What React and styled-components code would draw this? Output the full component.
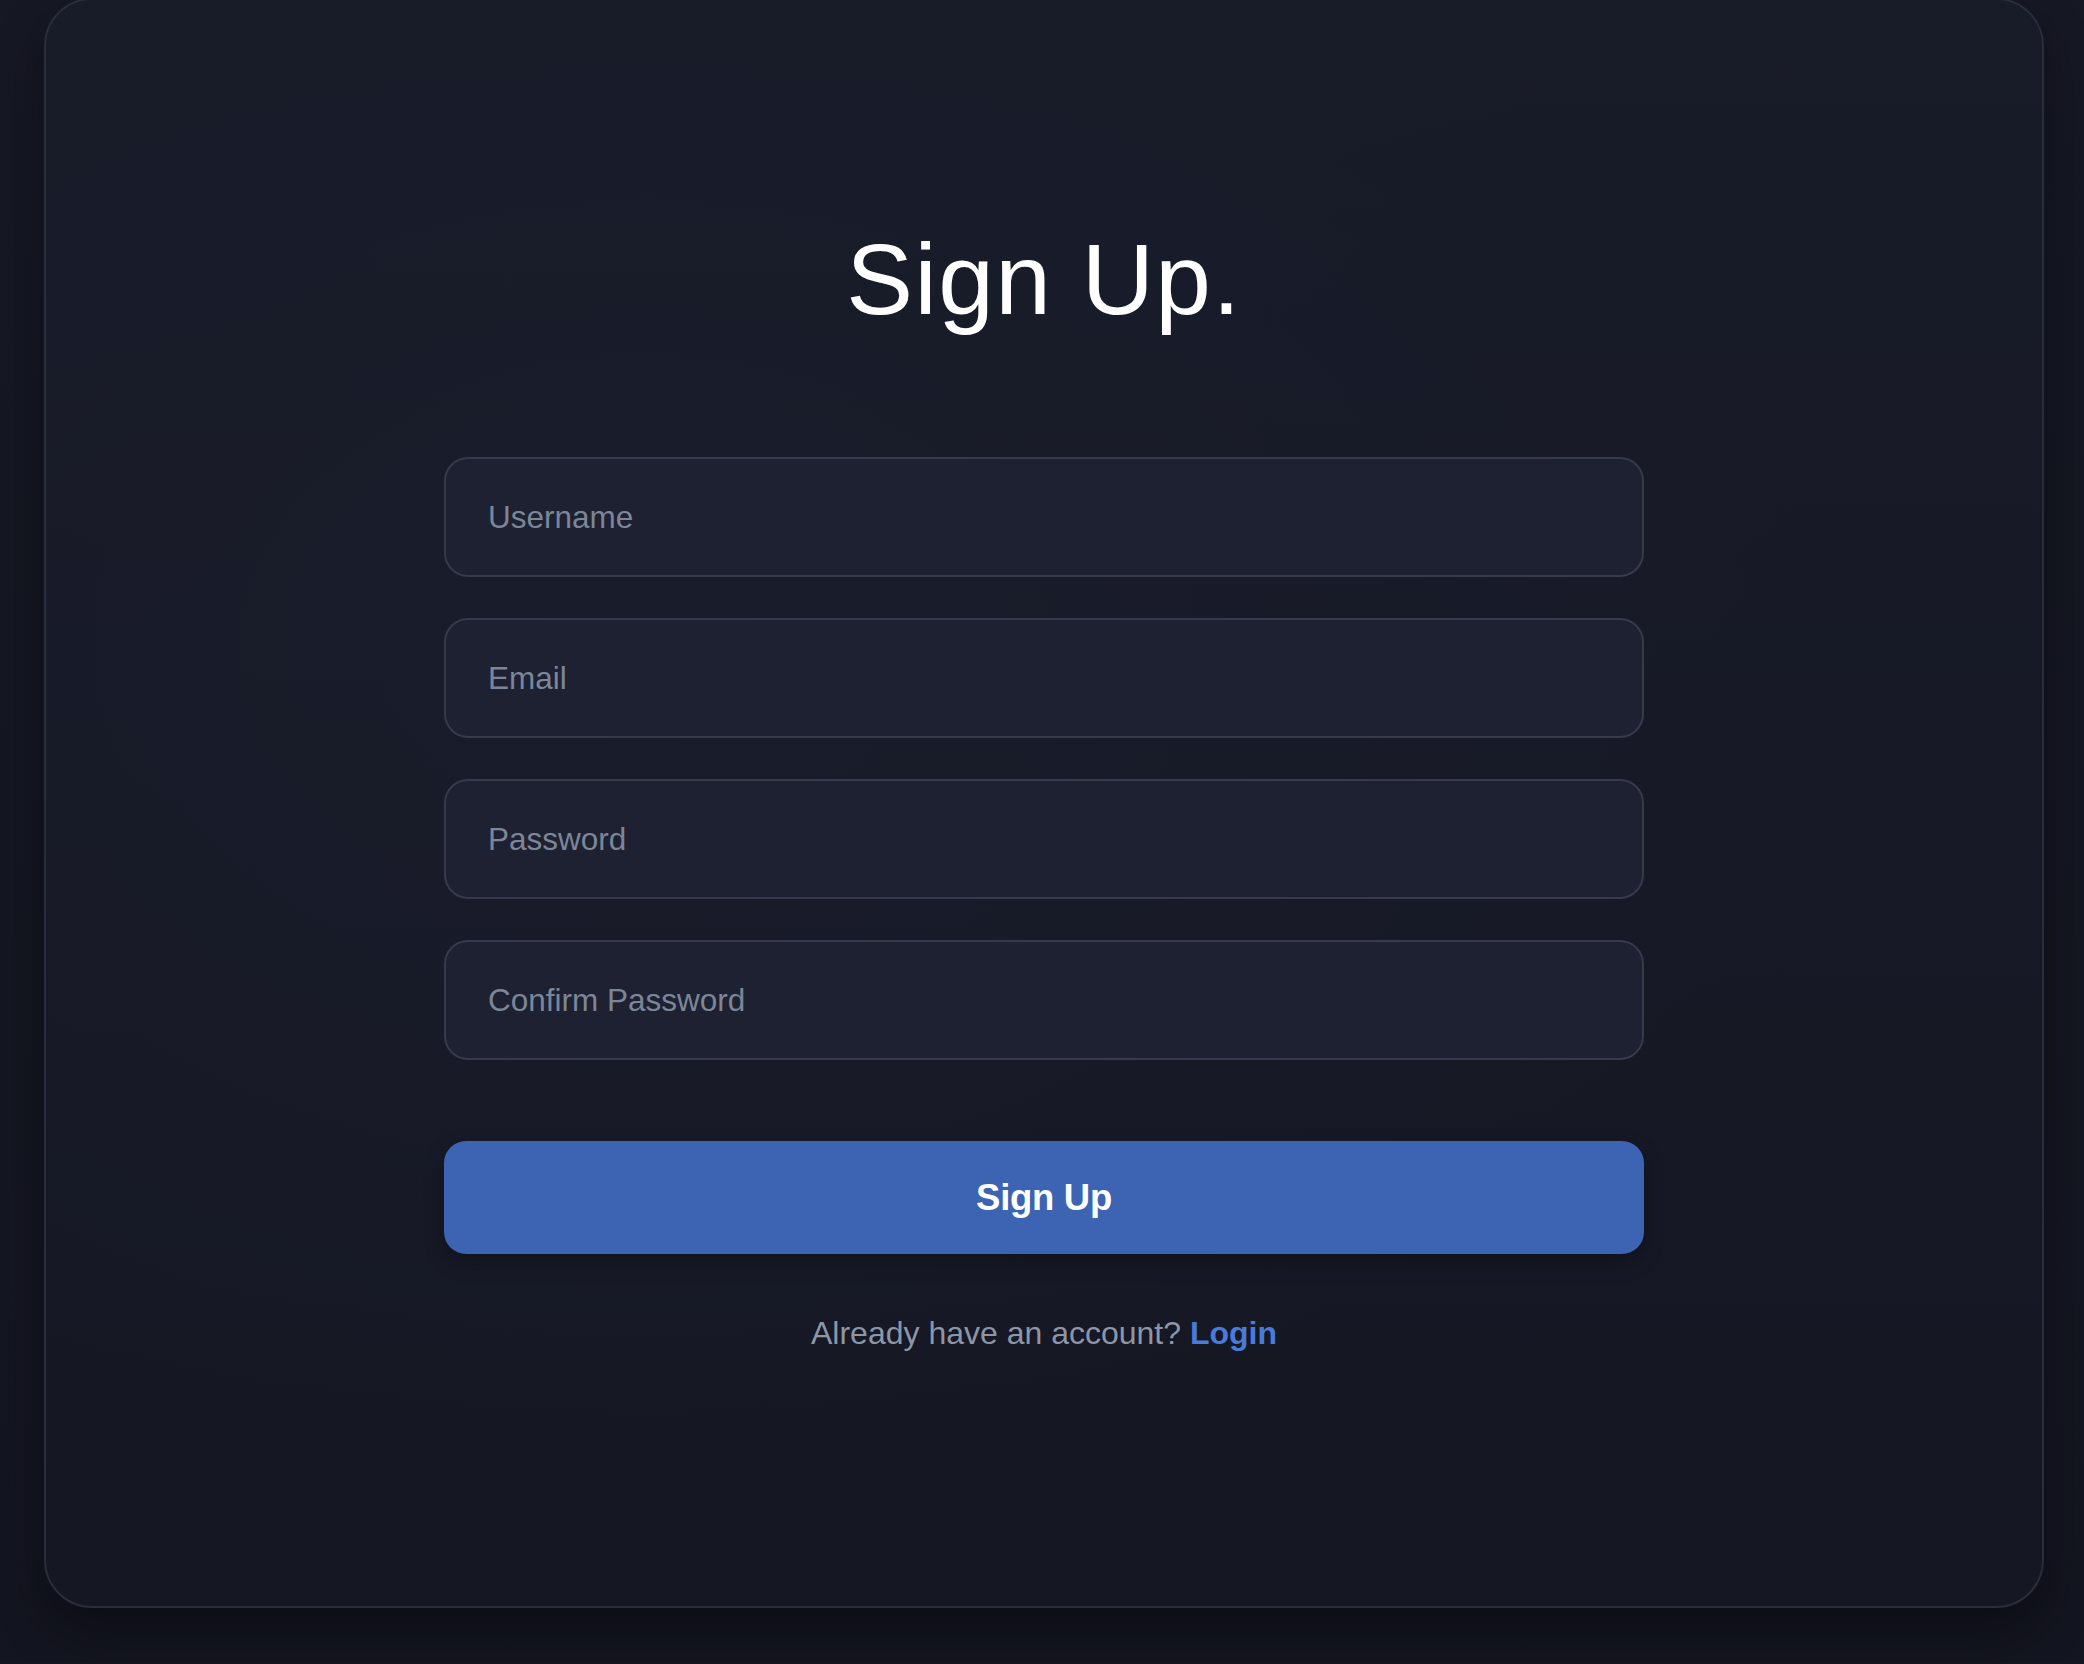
import styled, { createGlobalStyle } from "styled-components";

const GlobalStyle = createGlobalStyle`
  html, body {
    margin: 0;
    padding: 0;
    background: #141620;
    font-family: "Liberation Sans", Arial, sans-serif;
  }
  * {
    box-sizing: border-box;
  }
`;

function App() {
  const fields = ["Username", "Email", "Password", "Confirm Password"];

  return (
    <Page>
      <GlobalStyle />
      <Card>
        <Title>Sign Up.</Title>
        <Form onSubmit={(e) => e.preventDefault()}>
          {fields.map((name) => (
            <Field
              key={name}
              placeholder={name}
              type={name.includes("Password") ? "password" : name === "Email" ? "email" : "text"}
            />
          ))}
          <SubmitButton type="submit">Sign Up</SubmitButton>
        </Form>
        <Footer>
          Already have an account? <LoginLink href="#">Login</LoginLink>
        </Footer>
      </Card>
    </Page>
  );
}

const Page = styled.div`
  width: 100%;
  height: 1664px;
  padding: 0 40px 0 44px;
  background: linear-gradient(180deg, #161824 0%, #131520 100%);
`;

const Card = styled.div`
  width: 100%;
  height: 1610px;
  margin-top: -2px;
  border: 2px solid #2a2d3a;
  border-radius: 48px;
  background: radial-gradient(
      ellipse at 30% 40%,
      #191c2a 0%,
      rgba(24, 27, 40, 0) 60%
    ),
    linear-gradient(180deg, #181b28 0%, #151723 100%);
  box-shadow: 0 24px 48px rgba(5, 6, 12, 0.45);
  display: flex;
  flex-direction: column;
  align-items: center;
  padding-top: 219px;
`;

const Title = styled.h1`
  margin: 0;
  font-family: "Liberation Sans", Arial, sans-serif;
  font-weight: 400;
  font-size: 100px;
  line-height: 120px;
  letter-spacing: 1.5px;
  color: #ffffff;
`;

const Form = styled.form`
  width: 1200px;
  margin-top: 118px;
  display: flex;
  flex-direction: column;
  gap: 41px;
`;

const Field = styled.input`
  width: 100%;
  height: 120px;
  padding: 0 42px;
  border: 2px solid #363a4b;
  border-radius: 24px;
  background: #1d2131;
  color: #e5e7eb;
  font-family: "Liberation Sans", Arial, sans-serif;
  font-size: 31.5px;
  outline: none;

  &::placeholder {
    color: #7c8698;
  }
`;

const SubmitButton = styled.button`
  width: 100%;
  height: 113px;
  margin-top: 40px;
  border: 0;
  border-radius: 22px;
  background: #3d63b3;
  color: #ffffff;
  font-family: "Liberation Sans", Arial, sans-serif;
  font-weight: 700;
  font-size: 36.5px;
  letter-spacing: -0.3px;
  cursor: pointer;
  box-shadow: 0 8px 20px rgba(0, 0, 0, 0.25);
`;

const Footer = styled.p`
  margin: 60px 0 0;
  font-size: 32px;
  line-height: 38px;
  color: #8c96a8;
`;

const LoginLink = styled.a`
  color: #4a7bdb;
  font-weight: 700;
  text-decoration: none;
`;

export default App;
